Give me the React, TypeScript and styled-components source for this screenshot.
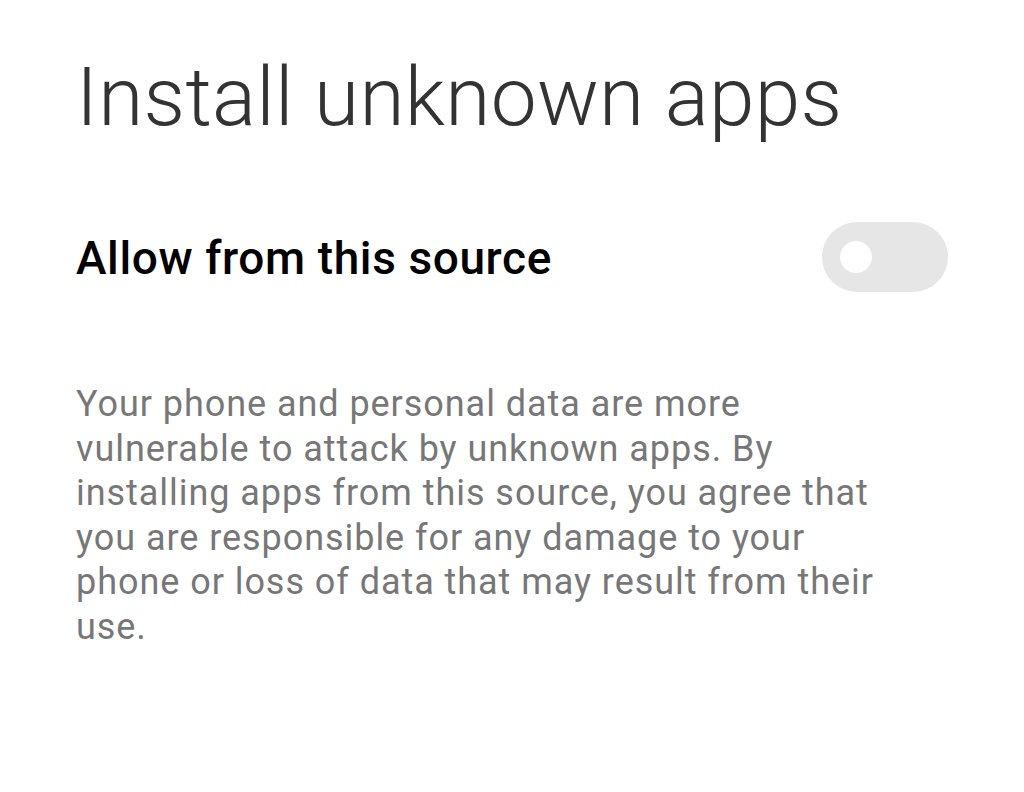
import styled, { createGlobalStyle } from "styled-components";

const GlobalStyle = createGlobalStyle`
    html, body {
        margin: 0;
        padding: 0;
        background: #ffffff;
        font-family: Roboto, "Noto Sans", sans-serif;
    }
    * {
        box-sizing: border-box;
    }
`;

const Screen = styled.div`
    width: 1024px;
    height: 792px;
    background: #ffffff;
    padding: 47px 76px 0 76px;
    display: flex;
    flex-direction: column;
`;

const Title = styled.h1`
    margin: 0;
    font-size: 82px;
    font-weight: 300;
    line-height: 100px;
    letter-spacing: 0.3px;
    color: #333333;
`;

const Row = styled.div`
    margin-top: 73px;
    display: flex;
    align-items: center;
    justify-content: space-between;
`;

const Label = styled.div`
    font-size: 46px;
    font-weight: 500;
    line-height: 70px;
    letter-spacing: 0.6px;
    padding-top: 3px;
    color: #000000;
`;

const Track = styled.div<{ $on?: boolean }>`
    width: 126px;
    height: 70px;
    border-radius: 35px;
    background: ${(p) => (p.$on ? "#0d84ff" : "#e6e6e6")};
    display: flex;
    align-items: center;
    justify-content: ${(p) => (p.$on ? "flex-end" : "flex-start")};
    padding: 0 18px;
`;

const Knob = styled.div`
    width: 32px;
    height: 32px;
    border-radius: 50%;
    background: #ffffff;
`;

const Description = styled.p`
    margin: 89px 0 0 0;
    font-size: 36px;
    line-height: 44.5px;
    letter-spacing: 0.95px;
    color: #777777;
    max-width: 814px;
`;

export default function App() {
    return (
        <Screen>
            <GlobalStyle />
            <Title>Install unknown apps</Title>
            <Row>
                <Label>Allow from this source</Label>
                <Track>
                    <Knob />
                </Track>
            </Row>
            <Description>
                Your phone and personal data are more vulnerable to attack by unknown apps. By
                installing apps from this source, you agree that you are responsible for any damage
                to your phone or loss of data that may result from their use.
            </Description>
        </Screen>
    );
}
